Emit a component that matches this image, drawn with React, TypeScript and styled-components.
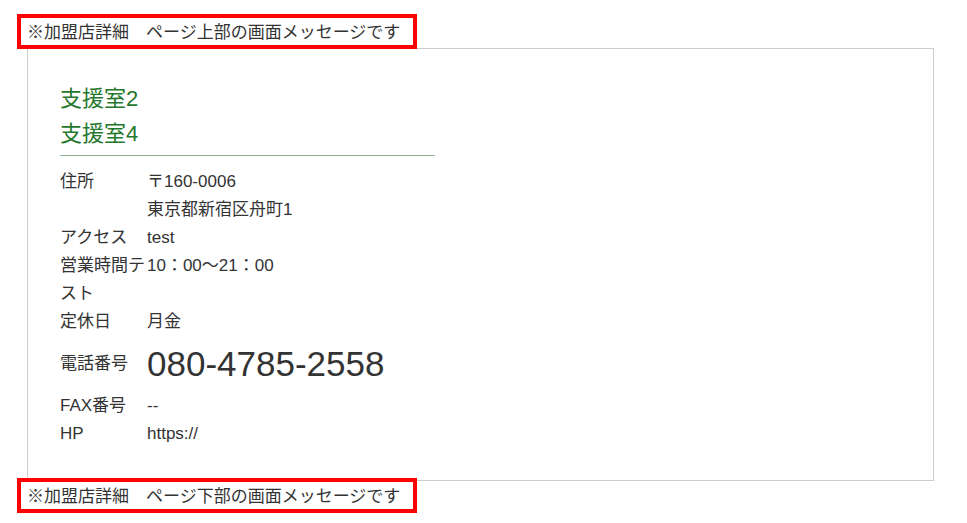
import { Fragment } from "react";
import { createGlobalStyle, styled } from "styled-components";

const GlobalStyle = createGlobalStyle`
  body {
    margin: 0;
    background: #fff;
    color: #333;
    font-family: "Liberation Sans", "Noto Sans CJK JP", sans-serif;
  }
`;

const Page = styled.div`
  padding: 14px 0 0 17px;
  display: flex;
  flex-direction: column;
  align-items: flex-start;
`;

const Message = styled.div<{ $overlap?: number }>`
  position: relative;
  z-index: 1;
  box-sizing: border-box;
  width: 400px;
  height: 35px;
  margin-top: ${({ $overlap }) => ($overlap ? `-${$overlap}px` : "0")};
  padding: 3px 6px 0;
  border: 4px solid #ff0000;
  background: #fff;
  font-size: 17px;
  line-height: 24px;
  white-space: nowrap;
  color: #333;
`;

const Panel = styled.div`
  box-sizing: border-box;
  width: 907px;
  margin: -1px 0 0 10px;
  padding: 32px;
  border: 1px solid #ccc;
`;

const Heading = styled.div`
  width: 375px;
  padding-bottom: 4px;
  margin-bottom: 12px;
  border-bottom: 1px solid #8db58d;
`;

const ShopName = styled.div`
  color: #24782c;
  font-size: 22px;
  line-height: 35px;
`;

const InfoList = styled.dl`
  margin: 0;
  display: grid;
  grid-template-columns: 87px 1fr;
  font-size: 17px;
  line-height: 28px;
`;

const Label = styled.dt<{ $center?: boolean }>`
  margin: 0;
  align-self: ${({ $center }) => ($center ? "center" : "start")};
`;

const Value = styled.dd`
  margin: 0;
`;

const Phone = styled.dd`
  margin: 0;
  font-size: 35px;
  line-height: 56px;
`;

const rows: { label: string; value: string[] }[] = [
  { label: "住所", value: ["〒160-0006", "東京都新宿区舟町1"] },
  { label: "アクセス", value: ["test"] },
  { label: "営業時間テスト", value: ["10：00〜21：00"] },
  { label: "定休日", value: ["月金"] },
];

export default function App() {
  return (
    <>
      <GlobalStyle />
      <Page>
        <Message>※加盟店詳細　ページ上部の画面メッセージです</Message>
        <Panel>
          <Heading>
            <ShopName>支援室2</ShopName>
            <ShopName>支援室4</ShopName>
          </Heading>
          <InfoList>
            {rows.map((row) => (
              <Fragment key={row.label}>
                <Label>{row.label}</Label>
                <Value>
                  {row.value.map((line) => (
                    <div key={line}>{line}</div>
                  ))}
                </Value>
              </Fragment>
            ))}
            <Label $center>電話番号</Label>
            <Phone>080-4785-2558</Phone>
            <Label>FAX番号</Label>
            <Value>--</Value>
            <Label>HP</Label>
            <Value>https://</Value>
          </InfoList>
        </Panel>
        <Message $overlap={3}>※加盟店詳細　ページ下部の画面メッセージです</Message>
      </Page>
    </>
  );
}
